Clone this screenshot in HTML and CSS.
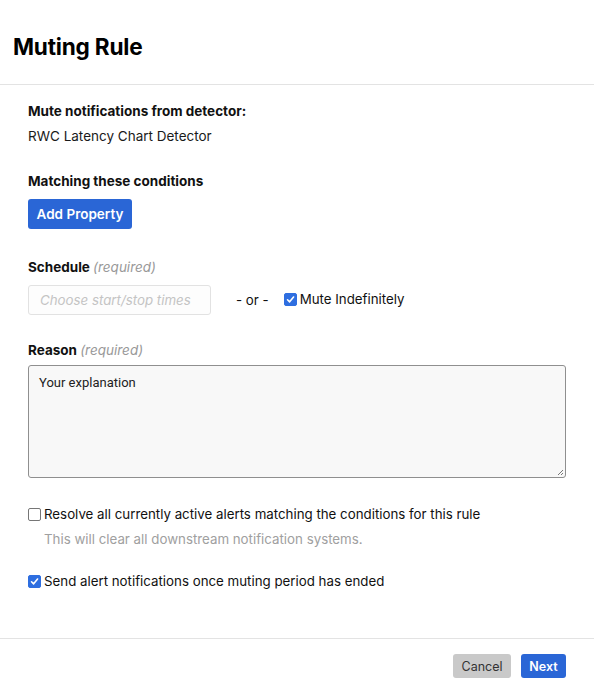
FILE: index.html
```html
<!DOCTYPE html>
<html>
<head>
<meta charset="utf-8">
<link rel="stylesheet" href="styles.css">
</head>
<body>
<div class="modal">
  <header class="modal-header">
    <h1 class="title">Muting Rule</h1>
  </header>
  <main class="modal-body">
    <div class="label lbl-first">Mute notifications from detector:</div>
    <div class="value">RWC Latency Chart Detector</div>
    <div class="label lbl-match">Matching these conditions</div>
    <div class="btn-row"><button class="btn btn-primary btn-add">Add Property</button></div>
    <div class="label lbl-schedule">Schedule <span class="req">(required)</span></div>
    <div class="schedule-row">
      <div class="time-input">Choose start/stop times</div>
      <span class="or">- or -</span>
      <label class="check"><span class="box checked"><svg viewBox="0 0 14 14" width="14" height="14"><path d="M3.2 7.3 L5.9 10 L10.9 3.8" fill="none" stroke="#fff" stroke-width="2" stroke-linecap="round" stroke-linejoin="round"/></svg></span><span class="check-text">Mute Indefinitely</span></label>
    </div>
    <div class="label lbl-reason">Reason <span class="req">(required)</span></div>
    <div class="textarea">Your explanation<svg class="grip" viewBox="0 0 8 8" width="8" height="8"><path d="M7 2 L2 7 M7 5 L5 7" stroke="#777" stroke-width="1"/></svg></div>
    <label class="check check-resolve"><span class="box"></span><span class="check-text">Resolve all currently active alerts matching the conditions for this rule</span></label>
    <div class="help">This will clear all downstream notification systems.</div>
    <label class="check check-send"><span class="box checked"><svg viewBox="0 0 14 14" width="14" height="14"><path d="M3.2 7.3 L5.9 10 L10.9 3.8" fill="none" stroke="#fff" stroke-width="2" stroke-linecap="round" stroke-linejoin="round"/></svg></span><span class="check-text">Send alert notifications once muting period has ended</span></label>
  </main>
  <footer class="modal-footer">
    <button class="btn btn-secondary">Cancel</button>
    <button class="btn btn-primary btn-next">Next</button>
  </footer>
</div>
</body>
</html>
```
FILE: styles.css
```css
* { box-sizing: border-box; }
html, body { margin: 0; padding: 0; background: #fff; }
body {
  font-family: Inter, "Noto Sans", "Liberation Sans", sans-serif;
  color: #1a1a1a;
  font-size: 13.3px;
}
.modal { width: 594px; height: 692px; display: flex; flex-direction: column; }
.modal-header {
  height: 85px;
  border-bottom: 1px solid #e3e3e3;
  padding: 32px 13px 0;
}
.title {
  margin: 0;
  font-size: 22.6px;
  line-height: 30px;
  font-weight: 700;
  color: #000;
  letter-spacing: -0.2px;
}
.modal-body {
  padding: 16px 28px 0;
  display: flex;
  flex-direction: column;
  height: 554px;
  border-bottom: 1px solid #e3e3e3;
}
.label { font-weight: 700; line-height: 20px; color: #111; font-size: 13.5px; }
.req { font-weight: 400; font-style: italic; color: #999; }
.value { line-height: 20px; margin-top: 5px; font-size: 13.5px; }
.lbl-match { margin-top: 25px; }
.btn-row { margin-top: 8px; display: flex; }
.btn {
  font-family: inherit;
  border: none;
  border-radius: 3px;
  font-size: 13px;
  cursor: pointer;
}
.btn-primary { background: #2a66d6; color: #fff; font-weight: 600; }
.btn-add { height: 30px; width: 104px; padding: 0; font-size: 13.5px; }
.lbl-schedule { margin-top: 28px; }
.schedule-row { margin-top: 8px; display: flex; align-items: center; height: 30px; }
.time-input {
  width: 183px;
  height: 30px;
  border: 1px solid #e2e2e2;
  border-radius: 3px;
  background: #fdfdfd;
  color: #c4c4c4;
  font-style: italic;
  line-height: 28px;
  padding-left: 11px;
}
.or { margin-left: 25px; margin-right: 15px; color: #111; }
.check { display: flex; align-items: center; line-height: 20px; }
.schedule-row .check { margin-top: -2px; }
.box {
  width: 13px; height: 13px;
  border: 1px solid #767676;
  border-radius: 2px;
  background: #fff;
  flex: none;
  display: flex; align-items: center; justify-content: center;
  margin-right: 3px;
}
.box.checked { background: #2e6ee0; border-color: #2e6ee0; }
.box svg { width: 13px; height: 13px; }
.check-text { font-size: 13.3px; color: #111; }
.lbl-reason { margin-top: 25px; }
.textarea {
  position: relative;
  margin-top: 5px;
  height: 113px;
  width: 538px;
  border: 1px solid #8f8f8f;
  border-radius: 3px;
  background: #f8f8f8;
  padding: 7px 10px;
  font-family: Roboto, "Liberation Sans", sans-serif;
  font-size: 13px;
  line-height: 20px;
  color: #222;
}
.grip { position: absolute; right: 1px; bottom: 1px; }
.check-resolve { margin-top: 26px; }
.help { margin-top: 5px; margin-left: 16px; line-height: 20px; color: #a0a0a0; }
.check-send { margin-top: 22px; }
.modal-footer {
  display: flex;
  justify-content: flex-end;
  align-items: flex-start;
  padding: 15px 28px 0;
  gap: 10px;
}
.btn-secondary { background: #c9c9c9; color: #333; height: 24px; width: 58px; padding: 0; font-size: 12.5px; font-weight: 400; }
.btn-next { height: 24px; width: 45px; padding: 0; font-size: 12.5px; }
```
